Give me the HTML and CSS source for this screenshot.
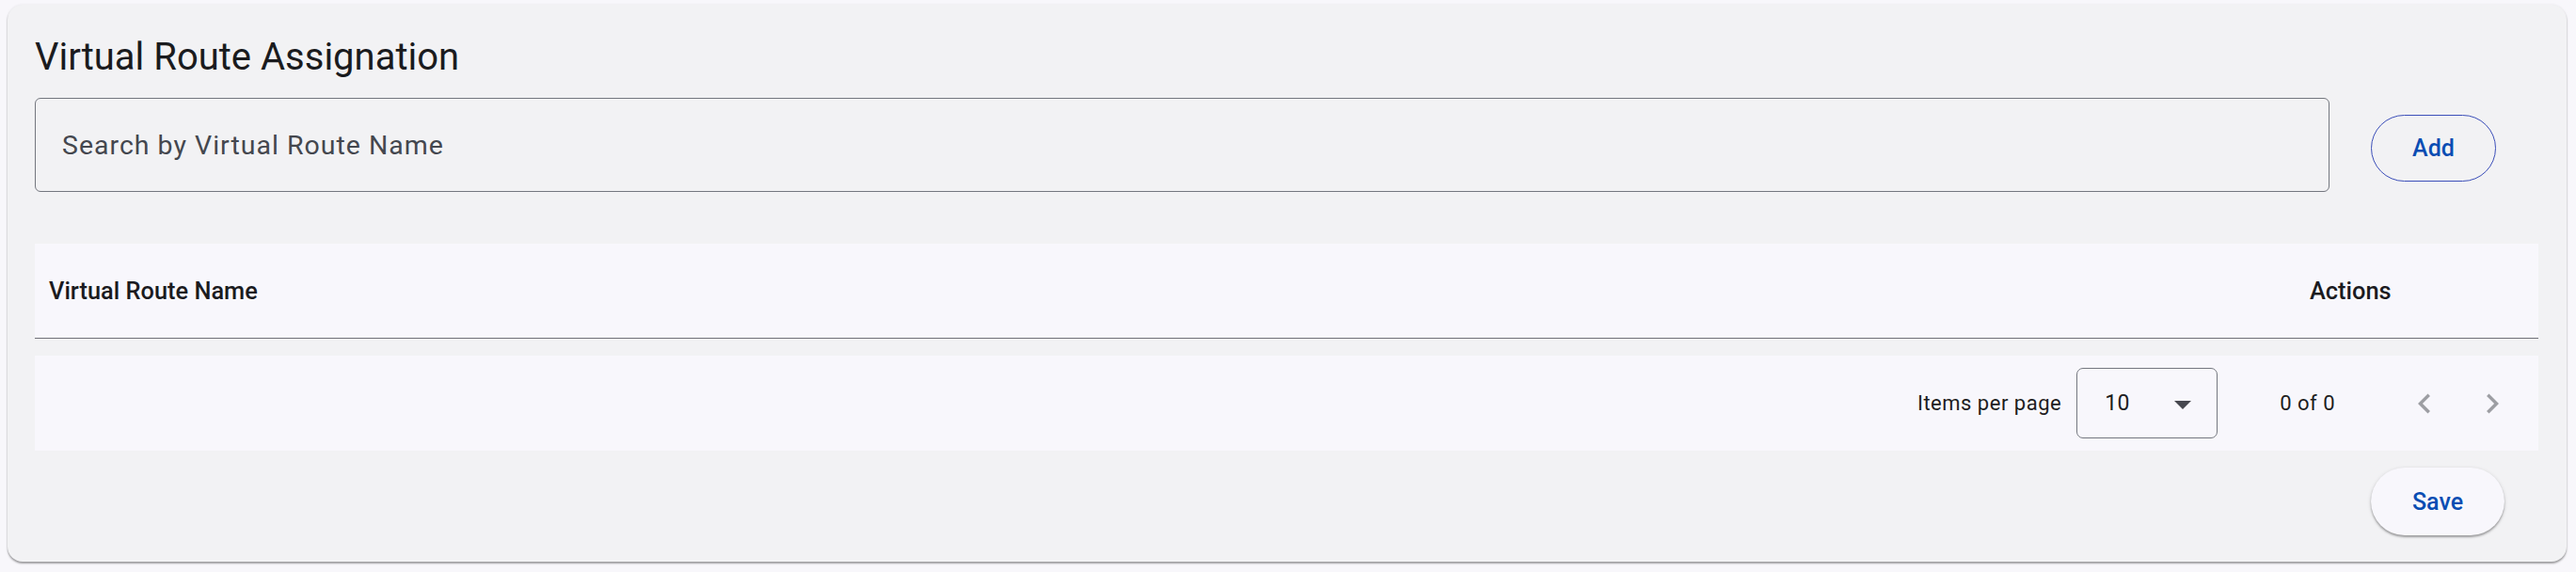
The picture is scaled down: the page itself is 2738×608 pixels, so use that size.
FILE: index.html
```html
<!DOCTYPE html>
<html lang="en">
<head>
<meta charset="utf-8">
<title>Virtual Route Assignation</title>
<link rel="stylesheet" href="styles.css">
</head>
<body>
<div class="card">
  <h1 class="title">Virtual Route Assignation</h1>
  <div class="search-row">
    <div class="field"><span class="placeholder">Search by Virtual Route Name</span></div>
    <button class="btn btn-outline">Add</button>
  </div>
  <div class="table">
    <div class="thead">
      <div class="th th-name">Virtual Route Name</div>
      <div class="th th-actions">Actions</div>
    </div>
    <div class="paginator">
      <span class="pg-label">Items per page</span>
      <div class="pg-select">
        <span>10</span>
        <svg class="pg-arrow" width="18" height="9" viewBox="0 0 18 9"><path d="M0 0 L18 0 L9 9 Z" fill="#46474f"/></svg>
      </div>
      <span class="pg-range">0 of 0</span>
      <div class="pg-nav">
        <svg width="42" height="42" viewBox="0 0 24 24"><path d="M15.41 7.41L14 6l-6 6 6 6 1.41-1.41L10.83 12z" fill="#9d9ea3"/></svg>
      </div>
      <div class="pg-nav">
        <svg width="42" height="42" viewBox="0 0 24 24"><path d="M10 6L8.59 7.41 13.17 12l-4.58 4.59L10 18l6-6z" fill="#9d9ea3"/></svg>
      </div>
    </div>
  </div>
  <div class="footer">
    <button class="btn btn-elevated">Save</button>
  </div>
</div>
</body>
</html>
```
FILE: styles.css
```css
* { box-sizing: border-box; }
html, body { height: 100%; }
body {
  margin: 0;
  padding: 5px 10px 0 8px;
  background: #f8f7fb;
  font-family: Roboto, "Liberation Sans", Arial, sans-serif;
  color: #1b1b1f;
}
.card {
  background: #f2f2f4;
  border-radius: 16px;
  padding: 32px 30px 28px 29px;
  box-shadow: 0 2px 2px rgba(0,0,0,0.35), 0 0 3px rgba(0,0,0,0.07);
  display: flex;
  flex-direction: column;
}
.title {
  margin: 0;
  font-size: 40px;
  line-height: 48px;
  font-weight: 400;
  color: #1a1b1e;
}
.search-row {
  margin-top: 19px;
  display: flex;
  align-items: flex-start;
}
.field {
  flex: 1;
  height: 100px;
  border: 1.5px solid #74777f;
  border-radius: 6px;
  display: flex;
  align-items: center;
  padding-left: 28px;
}
.placeholder {
  font-size: 28.5px;
  letter-spacing: 1px;
  color: #44474e;
}
.btn {
  font-family: Roboto, "Liberation Sans", Arial, sans-serif;
  font-size: 25px;
  font-weight: 500;
  color: #0a4db3;
  border-radius: 40px;
  cursor: pointer;
}
.btn-outline {
  margin: 18px 45px 0 44px;
  width: 133px;
  height: 71px;
  background: transparent;
  border: 1.5px solid #3c4fb9;
}
.table {
  margin-top: 55px;
  display: flex;
  flex-direction: column;
}
.thead {
  height: 101px;
  background: #f8f7fc;
  border-bottom: 1.5px solid #6f7077;
  display: flex;
  align-items: center;
}
.th {
  font-size: 25.4px;
  font-weight: 500;
  color: #1b1b1f;
}
.th-name { flex: 1; padding-left: 15px; }
.th-actions { width: 243px; }
.paginator {
  margin-top: 18px;
  height: 101px;
  background: #f8f7fc;
  display: flex;
  align-items: center;
  justify-content: flex-end;
  padding-right: 13px;
  font-size: 22px;
  letter-spacing: 0.5px;
  color: #1d1d21;
}
.pg-label { margin-right: 16px; }
.pg-select {
  width: 150px;
  height: 75px;
  border: 1.5px solid #74777f;
  border-radius: 7px;
  display: flex;
  align-items: center;
  justify-content: space-between;
  padding: 0 27px 0 29px;
  font-size: 23px;
}
.pg-arrow { margin-top: 4px; }
.pg-range { margin-left: 66px; margin-right: 59px; }
.pg-nav {
  width: 72px;
  height: 72px;
  display: flex;
  align-items: center;
  justify-content: center;
}
.footer {
  margin-top: 18px;
  display: flex;
  justify-content: flex-end;
  padding-right: 36px;
}
.btn-elevated {
  width: 142px;
  height: 72px;
  border: none;
  background: #f8f7fc;
  box-shadow: 0 2px 2px rgba(0,0,0,0.28), 0 1px 4px rgba(0,0,0,0.14);
}
```
